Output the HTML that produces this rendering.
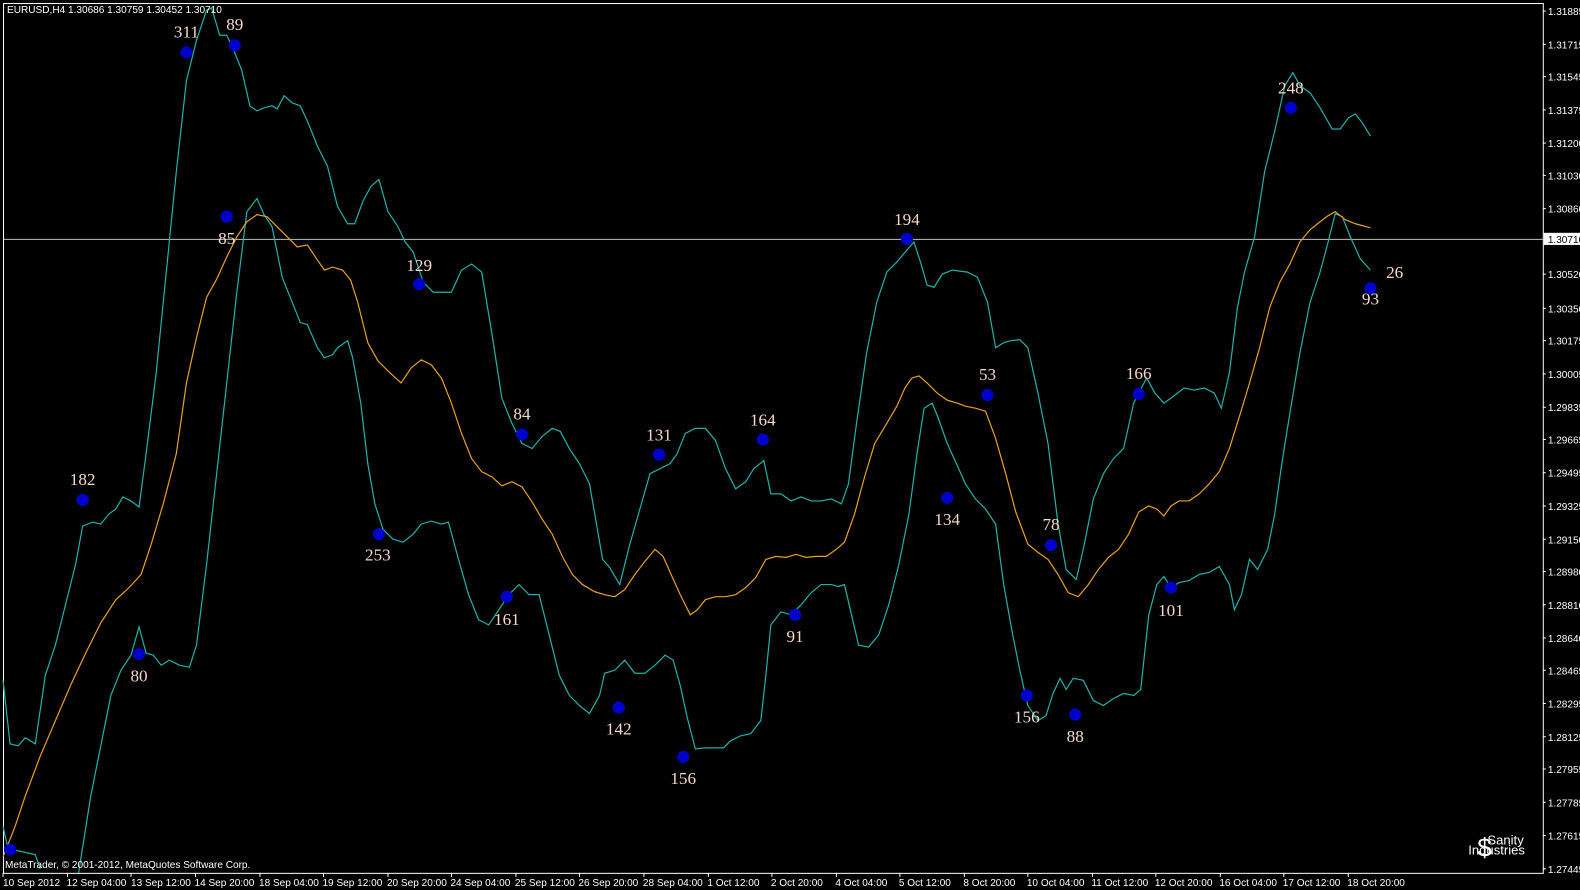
<!DOCTYPE html>
<html><head><meta charset="utf-8"><style>
html,body{margin:0;padding:0;background:#000;width:1580px;height:890px;overflow:hidden}
svg{display:block}
.ax{font-family:"Liberation Sans",sans-serif;font-size:10px;fill:#fff}
.lb{font-family:"Liberation Serif",serif;font-size:17px;fill:#f8d8c8;text-anchor:middle}
</style></head><body>
<svg width="1580" height="890" xmlns="http://www.w3.org/2000/svg">
<rect x="0" y="0" width="1580" height="890" fill="#000"/>
<g transform="scale(1.0077 1.0079)">
<rect x="3.5" y="3.5" width="1528" height="863" fill="none" stroke="#fff" stroke-width="1"/>
<line x1="4" y1="237.5" x2="1531" y2="237.5" stroke="#c0c0c0" stroke-width="1"/>
<g fill="none" stroke-width="1.2">
<polyline stroke="#20b2aa" points="3,675 10,738 18,740 25,732 35,738 45,670 55,640 65,600 75,560 82,522 92,518 100,520 108,510 115,505 122,493 130,497 138,503 145,450 155,370 165,270 175,170 185,80 195,40 205,10 210,8 218,35 225,35 232,50 240,70 248,105 255,110 262,107 270,105 275,108 282,95 290,102 298,105 305,120 315,145 325,165 335,205 345,222 352,222 360,200 368,185 376,178 385,210 395,225 402,240 410,250 420,280 430,290 440,290 448,290 458,268 468,262 478,270 488,330 498,395 508,420 518,440 528,445 538,433 548,425 556,428 565,445 575,460 585,480 598,555 605,563 615,580 625,540 635,505 645,470 655,465 665,460 672,450 680,430 690,425 700,425 710,437 720,465 730,485 740,478 748,465 758,457 765,490 775,490 785,497 795,493 805,497 815,497 825,495 835,500 842,480 850,420 860,350 870,300 880,270 890,260 900,248 907,240 915,265 920,283 927,285 935,272 945,268 960,270 970,275 980,300 988,345 996,340 1003,338 1012,337 1020,345 1030,390 1040,440 1045,480 1050,520 1058,565 1068,575 1075,545 1085,495 1095,470 1105,455 1115,445 1125,400 1130,390 1138,375 1146,390 1155,400 1162,395 1175,385 1185,387 1195,385 1205,390 1212,405 1220,370 1228,305 1235,270 1245,235 1255,170 1265,130 1275,85 1283,72 1290,85 1300,92 1310,107 1322,128 1330,128 1338,117 1345,113 1352,122 1360,135"/>
<polyline stroke="#20b2aa" points="3,820 8,842 35,848 40,862"/>
<polyline stroke="#20b2aa" points="78,866 90,790 100,740 110,690 120,665 130,650 138,622 145,648 152,650 160,660 168,655 178,660 188,662 195,640 205,560 215,470 225,380 235,290 245,210 255,197 262,213 270,225 280,275 288,295 298,320 305,322 315,345 322,355 330,352 335,345 345,338 350,355 358,400 365,460 372,500 380,525 390,535 400,538 410,530 418,520 428,517 438,520 445,518 455,555 465,590 475,615 485,620 495,605 505,590 515,580 525,590 535,590 545,630 555,670 565,690 575,700 585,708 595,690 600,668 610,665 620,655 630,668 640,668 650,660 660,650 668,655 675,680 682,712 690,743 700,742 710,742 718,742 725,735 735,730 745,728 755,715 760,670 765,620 775,607 785,610 795,600 805,588 815,580 825,580 832,582 838,580 845,610 852,640 862,642 872,630 882,600 892,560 902,510 910,450 917,405 925,400 930,412 940,440 950,462 958,480 968,495 978,505 988,520 996,580 1005,630 1012,665 1020,700 1030,715 1038,710 1045,688 1052,673 1058,684 1065,673 1075,675 1085,695 1095,700 1105,693 1115,688 1125,690 1132,684 1140,610 1148,580 1155,572 1162,583 1170,578 1180,576 1190,570 1200,568 1210,562 1220,580 1225,605 1232,590 1240,555 1248,565 1258,545 1265,510 1272,460 1280,410 1290,350 1300,300 1310,270 1318,240 1325,212 1332,215 1340,235 1350,257 1360,268"/>
<polyline stroke="#e8a020" points="3,850 15,820 25,790 40,750 55,715 70,680 85,648 100,618 115,595 128,583 140,570 150,540 162,500 175,450 185,380 195,335 205,295 215,277 225,255 235,235 245,220 255,213 265,215 275,225 285,235 295,245 305,243 315,258 322,268 330,265 340,268 348,278 355,300 365,340 375,358 385,368 398,380 408,365 418,357 428,362 438,375 448,400 458,430 468,455 478,468 488,473 498,482 508,478 518,483 528,498 538,515 548,530 558,552 568,570 578,580 590,587 600,590 610,592 620,585 630,570 640,557 650,545 658,552 666,570 675,590 685,610 692,605 700,595 710,592 720,592 730,590 740,583 750,573 760,555 770,552 780,553 790,550 800,553 810,552 820,552 830,545 838,538 848,510 858,473 868,440 880,420 890,403 898,385 905,375 912,373 920,380 930,390 940,397 950,400 958,403 968,405 978,408 988,435 998,470 1008,508 1020,540 1030,548 1040,555 1050,570 1060,588 1070,592 1080,580 1090,565 1100,553 1110,545 1120,530 1130,508 1140,502 1148,505 1155,512 1162,502 1170,497 1180,497 1190,490 1200,480 1210,468 1220,445 1230,413 1240,380 1250,345 1260,305 1270,280 1280,262 1290,240 1300,228 1310,220 1318,214 1325,210 1335,218 1345,222 1360,226"/>
</g>
<g fill="#0000cc">
<circle cx="185" cy="52" r="6"/><circle cx="233" cy="45" r="6"/><circle cx="225" cy="215" r="6"/><circle cx="82" cy="496" r="6"/><circle cx="138" cy="649" r="6"/><circle cx="376" cy="530" r="6"/><circle cx="416" cy="282" r="6"/><circle cx="518" cy="431" r="6"/><circle cx="503" cy="592" r="6"/><circle cx="614" cy="702" r="6"/><circle cx="678" cy="751" r="6"/><circle cx="654" cy="451" r="6"/><circle cx="757" cy="436" r="6"/><circle cx="789" cy="610" r="6"/><circle cx="900" cy="237" r="6"/><circle cx="940" cy="494" r="6"/><circle cx="980" cy="392" r="6"/><circle cx="1019" cy="690" r="6"/><circle cx="1067" cy="709" r="6"/><circle cx="1043" cy="541" r="6"/><circle cx="1130" cy="391" r="6"/><circle cx="1162" cy="583" r="6"/><circle cx="1281" cy="107" r="6"/><circle cx="1360" cy="286" r="6"/><circle cx="10" cy="843" r="6"/>
</g>
<g class="lb">
<text x="185" y="37">311</text><text x="233" y="30">89</text><text x="225" y="242">85</text><text x="82" y="481">182</text><text x="138" y="676">80</text><text x="375" y="556">253</text><text x="416" y="269">129</text><text x="518" y="416">84</text><text x="503" y="620">161</text><text x="614" y="729">142</text><text x="678" y="778">156</text><text x="654" y="437">131</text><text x="757" y="422">164</text><text x="789" y="637">91</text><text x="900" y="223">194</text><text x="940" y="521">134</text><text x="980" y="377">53</text><text x="1019" y="717">156</text><text x="1067" y="736">88</text><text x="1043" y="526">78</text><text x="1130" y="376">166</text><text x="1162" y="611">101</text><text x="1281" y="93">248</text><text x="1360" y="302">93</text><text x="1384" y="276">26</text>
</g>
<text class="ax" x="7" y="13">EURUSD,H4  1.30686 1.30759 1.30452 1.30710</text>
<text class="ax" x="5" y="861" font-size="11">MetaTrader, © 2001-2012, MetaQuotes Software Corp.</text>
<g class="ax">
<text x="1476" y="838" font-size="13">Sanity</text><text x="1457" y="848" font-size="13">Industries</text>
<text x="1466" y="850" font-size="26">$</text>
</g>
<g class="ax">
<text x="1536" y="15">1.31885</text><text x="1536" y="48">1.31715</text><text x="1536" y="80">1.31545</text><text x="1536" y="113">1.31375</text><text x="1536" y="146">1.31200</text><text x="1536" y="178">1.31030</text><text x="1536" y="211">1.30860</text><text x="1536" y="276">1.30520</text><text x="1536" y="310">1.30350</text><text x="1536" y="342">1.30175</text><text x="1536" y="375">1.30005</text><text x="1536" y="408">1.29835</text><text x="1536" y="440">1.29665</text><text x="1536" y="473">1.29495</text><text x="1536" y="506">1.29325</text><text x="1536" y="539">1.29150</text><text x="1536" y="571">1.28980</text><text x="1536" y="604">1.28810</text><text x="1536" y="637">1.28640</text><text x="1536" y="669">1.28465</text><text x="1536" y="702">1.28295</text><text x="1536" y="735">1.28125</text><text x="1536" y="767">1.27955</text><text x="1536" y="800">1.27785</text><text x="1536" y="833">1.27615</text><text x="1536" y="866">1.27445</text>
</g>
<rect x="1532" y="231" width="48" height="12" fill="#fff"/>
<text x="1536" y="241" font-family="Liberation Sans,sans-serif" font-size="10" fill="#000">1.30710</text>
<g stroke="#fff">
<path d="M1531 11h3M1531 44h3M1531 76h3M1531 109h3M1531 142h3M1531 174h3M1531 207h3M1531 272h3M1531 306h3M1531 338h3M1531 371h3M1531 404h3M1531 436h3M1531 469h3M1531 502h3M1531 535h3M1531 567h3M1531 600h3M1531 633h3M1531 665h3M1531 698h3M1531 731h3M1531 763h3M1531 796h3M1531 829h3M1531 862h3"/>
<path d="M3 866v4M67 866v4M130 866v4M194 866v4M258 866v4M321 866v4M385 866v4M448 866v4M512 866v4M575 866v4M639 866v4M703 866v4M766 866v4M830 866v4M893 866v4M957 866v4M1020 866v4M1084 866v4M1147 866v4M1211 866v4M1274 866v4M1338 866v4"/>
</g>
<g class="ax">
<text x="3" y="879">10 Sep 2012</text><text x="66" y="879">12 Sep 04:00</text><text x="130" y="879">13 Sep 12:00</text><text x="193" y="879">14 Sep 20:00</text><text x="257" y="879">18 Sep 04:00</text><text x="320" y="879">19 Sep 12:00</text><text x="384" y="879">20 Sep 20:00</text><text x="447" y="879">24 Sep 04:00</text><text x="511" y="879">25 Sep 12:00</text><text x="574" y="879">26 Sep 20:00</text><text x="638" y="879">28 Sep 04:00</text><text x="702" y="879">1 Oct 12:00</text><text x="765" y="879">2 Oct 20:00</text><text x="829" y="879">4 Oct 04:00</text><text x="892" y="879">5 Oct 12:00</text><text x="956" y="879">8 Oct 20:00</text><text x="1019" y="879">10 Oct 04:00</text><text x="1083" y="879">11 Oct 12:00</text><text x="1146" y="879">12 Oct 20:00</text><text x="1210" y="879">16 Oct 04:00</text><text x="1273" y="879">17 Oct 12:00</text><text x="1337" y="879">18 Oct 20:00</text>
</g>
</g>
</svg>
</body></html>
